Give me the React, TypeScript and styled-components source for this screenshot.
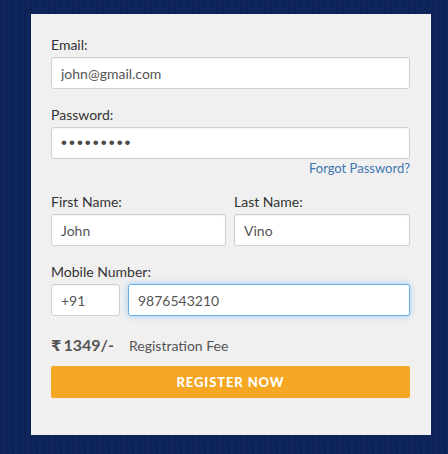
import React, { useEffect, useRef } from 'react';
import styled, { createGlobalStyle } from 'styled-components';

const GlobalStyle = createGlobalStyle`
  html, body {
    margin: 0;
    padding: 0;
  }

  body {
    background-color: #0c2359;
    background-image: repeating-linear-gradient(
      90deg,
      rgba(0, 0, 0, 0.03) 0px,
      rgba(0, 0, 0, 0.03) 2px,
      rgba(255, 255, 255, 0.01) 2px,
      rgba(255, 255, 255, 0.01) 6px
    );
    font-family: Lato, 'Open Sans', Arial, sans-serif;
    min-height: 454px;
  }
`;

const Page = styled.div`
  padding: 14px 0 0 31px;
`;

const Card = styled.form`
  box-sizing: border-box;
  width: 400px;
  height: 421px;
  padding: 22px 21px 0 20px;
  background: #f0f0f0;
`;

const Field = styled.div<{ $gap?: number }>`
  margin-bottom: ${(p) => (p.$gap ?? 17)}px;
`;

const Label = styled.label`
  display: block;
  font-size: 14px;
  line-height: 18px;
  margin-bottom: 3px;
  color: #333;
`;

const Input = styled.input<{ $focused?: boolean }>`
  box-sizing: border-box;
  display: block;
  width: 100%;
  height: 32px;
  padding: 0 9px;
  border: 1px solid ${(p) => (p.$focused ? '#66afe9' : '#cfcfcf')};
  border-radius: 3px;
  background: #fff;
  font-family: Lato, 'Open Sans', Arial, sans-serif;
  font-size: 14px;
  color: #555;
  outline: none;
  caret-color: #222;
  box-shadow: ${(p) =>
    p.$focused ? '0 0 6px rgba(102, 175, 233, 0.6)' : 'inset 0 1px 1px rgba(0,0,0,0.04)'};

  &[type='password'] {
    font-family: 'Liberation Sans', Arial, sans-serif;
    font-size: 17px;
    letter-spacing: 2px;
    color: #4a4a4a;
  }
`;

const ForgotLink = styled.a`
  display: block;
  text-align: right;
  font-size: 13px;
  line-height: 18px;
  margin-bottom: 16px;
  color: #3f76b4;
  text-decoration: none;
`;

const Row = styled.div<{ $cols: string }>`
  display: grid;
  grid-template-columns: ${(p) => p.$cols};
  column-gap: 8px;
`;

const FeeRow = styled.div`
  display: flex;
  align-items: center;
  height: 24px;
  margin-bottom: 9px;
  color: #555;
`;

const Price = styled.span`
  font-size: 16px;
  font-weight: 700;
  margin-right: 15px;
`;

const Rupee = styled.span`
  font-family: 'DejaVu Sans', sans-serif;
  font-weight: 700;
  font-size: 15px;
  margin-right: 2px;
`;

const FeeText = styled.span`
  font-size: 14px;
`;

const SubmitButton = styled.button`
  display: block;
  width: 100%;
  height: 32px;
  border: none;
  border-radius: 2px;
  background: #f5a623;
  color: #fff;
  font-family: Lato, 'Open Sans', Arial, sans-serif;
  font-size: 13px;
  font-weight: 900;
  letter-spacing: 0.9px;
  text-transform: uppercase;
  cursor: pointer;
`;

export default function App() {
  const mobileRef = useRef<HTMLInputElement>(null);

  useEffect(() => {
    const el = mobileRef.current;
    if (el) {
      el.focus();
      el.setSelectionRange(el.value.length, el.value.length);
    }
  }, []);

  return (
    <>
      <GlobalStyle />
      <Page>
        <Card onSubmit={(e) => e.preventDefault()}>
          <Field>
            <Label>Email:</Label>
            <Input type="email" defaultValue="john@gmail.com" />
          </Field>

          <Field $gap={0}>
            <Label>Password:</Label>
            <Input type="password" defaultValue="secret123" />
          </Field>
          <ForgotLink href="#">Forgot Password?</ForgotLink>

          <Row $cols="175px 1fr">
            <Field>
              <Label>First Name:</Label>
              <Input defaultValue="John" />
            </Field>
            <Field>
              <Label>Last Name:</Label>
              <Input defaultValue="Vino" />
            </Field>
          </Row>

          <Field>
            <Label>Mobile Number:</Label>
            <Row $cols="69px 1fr">
              <Input defaultValue="+91" />
              <Input ref={mobileRef} $focused defaultValue="9876543210" />
            </Row>
          </Field>

          <FeeRow>
            <Price>
              <Rupee>₹</Rupee>1349/-
            </Price>
            <FeeText>Registration Fee</FeeText>
          </FeeRow>

          <SubmitButton type="submit">Register Now</SubmitButton>
        </Card>
      </Page>
    </>
  );
}
